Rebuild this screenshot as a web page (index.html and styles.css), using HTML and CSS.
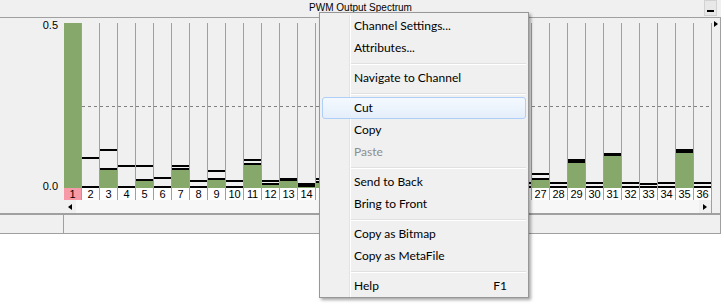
FILE: index.html
```html
<!DOCTYPE html>
<html lang="en">
<head>
    <meta charset="UTF-8">
    <title>PWM Output Spectrum</title>
    <link rel="stylesheet" href="styles.css">
</head>
<body>

<div class="window">
    <div class="titlebar">
        <span class="title">PWM Output Spectrum</span>
        <span class="min-btn"><span></span></span>
    </div>

    <div class="panel">
        <div class="chart-row">
            <div class="axis">
                <span>0.5</span>
                <span>0.0</span>
            </div>
            <div class="plot">
                <div class="ref-line"></div>
                <div class="columns"></div>
            </div>
            <div class="gutter"><span class="arrow-right"></span></div>
        </div>

        <div class="scroll-row">
            <div class="scroll-spacer"></div>
            <div class="scrollbar">
                <span class="scroll-btn"><i class="tri-left"></i></span>
                <span class="scroll-track"></span>
                <span class="scroll-btn"><i class="tri-right"></i></span>
            </div>
        </div>

        <div class="status-row">
            <div class="status-cell first"></div>
            <div class="status-cell"></div>
        </div>
    </div>
</div>

<div class="menu">
    <div class="menu-item">Channel Settings...</div>
    <div class="menu-item">Attributes...</div>
    <div class="menu-sep"></div>
    <div class="menu-item">Navigate to Channel</div>
    <div class="menu-sep"></div>
    <div class="menu-item active">Cut</div>
    <div class="menu-item">Copy</div>
    <div class="menu-item disabled">Paste</div>
    <div class="menu-sep"></div>
    <div class="menu-item">Send to Back</div>
    <div class="menu-item">Bring to Front</div>
    <div class="menu-sep"></div>
    <div class="menu-item">Copy as Bitmap</div>
    <div class="menu-item">Copy as MetaFile</div>
    <div class="menu-sep"></div>
    <div class="menu-item"><span>Help</span><span>F1</span></div>
</div>

<script>
    // [level, peak] per channel, full scale is 0.5
    const spectrum = [
        [0.5, null], [0.006, 0.094], [0.061, 0.118], [0.006, 0.070], [0.027, 0.070], [0.006, 0.033],
        [0.061, 0.070], [0.006, 0.024], [0.030, 0.055], [0.006, 0.024], [0.076, 0.088], [0.015, 0.024],
        [0.027, 0.030], [0.009, 0.015], [0.021, 0.030], [0.006, 0.024], [0.040, 0.061], [0.006, 0.018],
        [0.012, 0.030], [0.006, 0.021], [0.050, 0.064], [0.006, 0.018], [0.018, 0.027], [0.006, 0.021],
        [0.009, 0.015], [0.006, 0.018], [0.030, 0.045], [0.006, 0.018], [0.082, 0.088], [0.006, 0.018],
        [0.103, 0.106], [0.006, 0.018], [0.006, 0.015], [0.006, 0.018], [0.112, 0.118], [0.006, 0.018]
    ];
    const scale = 330; // px per unit
    const columns = document.querySelector(".columns");

    spectrum.forEach(([level, peak], i) => {
        const col = document.createElement("div");
        col.className = "col";

        const area = document.createElement("div");
        area.className = "bar-area";

        const h = Math.min(Math.round(level * scale), 165);
        const bar = document.createElement("div");
        bar.className = "bar";
        bar.style.height = h + "px";
        area.appendChild(bar);

        [level, peak].forEach(v => {
            if (v === null || v >= 0.5) return;
            const line = document.createElement("div");
            line.className = "level";
            line.style.bottom = Math.max(Math.round(v * scale) - 2, 0) + "px";
            area.appendChild(line);
        });

        const label = document.createElement("div");
        label.className = i === 0 ? "label selected" : "label";
        label.textContent = i + 1;

        col.appendChild(area);
        col.appendChild(label);
        columns.appendChild(col);
    });
</script>

</body>
</html>
```

FILE: styles.css
```css
* {
    margin: 0;
    padding: 0;
    box-sizing: border-box;
}

html, body {
    height: 100%;
}

body {
    position: relative;
    min-height: 305px;
    background-color: #fff;
    color: #000;
    font-family: "Liberation Sans", Arial, sans-serif;
    font-size: 11px;
}

.window {
    width: 721px;
    background-color: #f0f0f0;
}

.titlebar {
    display: grid;
    grid-template-columns: 1fr auto 1fr;
    height: 18px;
    border-bottom: 1px solid #a0a0a0;
}

.title {
    grid-column: 2;
    font-size: 10px;
    line-height: 16px;
}

.min-btn {
    grid-column: 3;
    justify-self: end;
    display: flex;
    align-items: flex-end;
    justify-content: center;
    width: 13px;
    height: 16px;
    margin-right: 4px;
    padding-bottom: 3px;
    border: 1px solid #d2d2d2;
    background-color: #e8e8e8;
}

.min-btn span {
    width: 7px;
    height: 2px;
    background-color: #000;
}

.panel {
    border-right: 1px solid #a0a0a0;
}

.chart-row {
    display: flex;
    height: 182px;
}

.axis {
    width: 64px;
    display: flex;
    flex-direction: column;
    justify-content: space-between;
    align-items: flex-end;
    padding: 1px 6px 7px 0;
    line-height: 13px;
}

.plot {
    position: relative;
    width: 648px;
    margin-top: 5px;
}

.ref-line {
    position: absolute;
    top: 83px;
    left: 0;
    right: 1px;
    height: 1px;
    background: repeating-linear-gradient(90deg, #808080 0 3px, transparent 3px 6px);
}

.columns {
    position: relative;
    display: flex;
}

.col {
    width: 18px;
    display: flex;
    flex-direction: column;
    border-right: 1px solid #a0a0a0;
}

.bar-area {
    position: relative;
    height: 165px;
}

.bar {
    position: absolute;
    left: 0;
    right: 0;
    bottom: 0;
    background-color: #86a86a;
}

.level {
    position: absolute;
    left: 0;
    right: 0;
    height: 2px;
    background-color: #000;
}

.label {
    height: 12px;
    line-height: 12px;
    text-align: center;
    background-color: #fff;
    letter-spacing: -0.2px;
}

.label.selected {
    background-color: #f59aa6;
}

.gutter {
    width: 8px;
    padding: 3px 0 0 2px;
}

.arrow-right,
.tri-right {
    display: block;
    width: 0;
    height: 0;
    border-left: 4px solid #000;
    border-top: 3px solid transparent;
    border-bottom: 3px solid transparent;
}

.tri-left {
    display: block;
    width: 0;
    height: 0;
    border-right: 4px solid #000;
    border-top: 3px solid transparent;
    border-bottom: 3px solid transparent;
}

.scroll-row {
    display: flex;
    height: 13px;
}

.scroll-spacer {
    width: 64px;
}

.scrollbar {
    width: 648px;
    display: flex;
    border-right: 1px solid #a0a0a0;
    background-color: #f7f7f7;
}

.scroll-btn {
    width: 12px;
    display: flex;
    align-items: center;
    justify-content: center;
    background-color: #f0f0f0;
}

.scroll-track {
    flex: 1;
}

.status-row {
    display: flex;
    height: 21px;
    border-top: 2px solid #a0a0a0;
    border-bottom: 1px solid #a0a0a0;
}

.status-cell.first {
    width: 64px;
    border-right: 1px solid #a0a0a0;
}

/* context menu */
.menu {
    position: absolute;
    top: 12px;
    left: 319px;
    width: 210px;
    padding: 2px 2px 0;
    border: 1px solid #979797;
    background-color: #f0f0f0;
    box-shadow: 2px 2px 3px rgba(0, 0, 0, 0.35);
    font-family: Lato, "Liberation Sans", sans-serif;
    font-size: 12px;
}

.menu::before {
    content: "";
    position: absolute;
    top: 2px;
    bottom: 0;
    left: 29px;
    width: 1px;
    background-color: #e2e3e3;
    box-shadow: 1px 0 #fff;
}

.menu-item {
    position: relative;
    display: flex;
    justify-content: space-between;
    height: 22px;
    line-height: 20px;
    padding: 0 18px 0 31px;
    border: 1px solid transparent;
    border-radius: 3px;
}

.menu-item.active {
    border-color: #aecff7;
    background: linear-gradient(#f4f9fe, #e4eefa);
}

.menu-item.disabled {
    color: #8d8d8d;
}

.menu-sep {
    height: 8px;
    margin-left: 28px;
    padding-top: 4px;
}

.menu-sep::after {
    content: "";
    display: block;
    height: 1px;
    background-color: #e0e0e0;
    border-bottom: 1px solid #fff;
    box-sizing: content-box;
}
```
